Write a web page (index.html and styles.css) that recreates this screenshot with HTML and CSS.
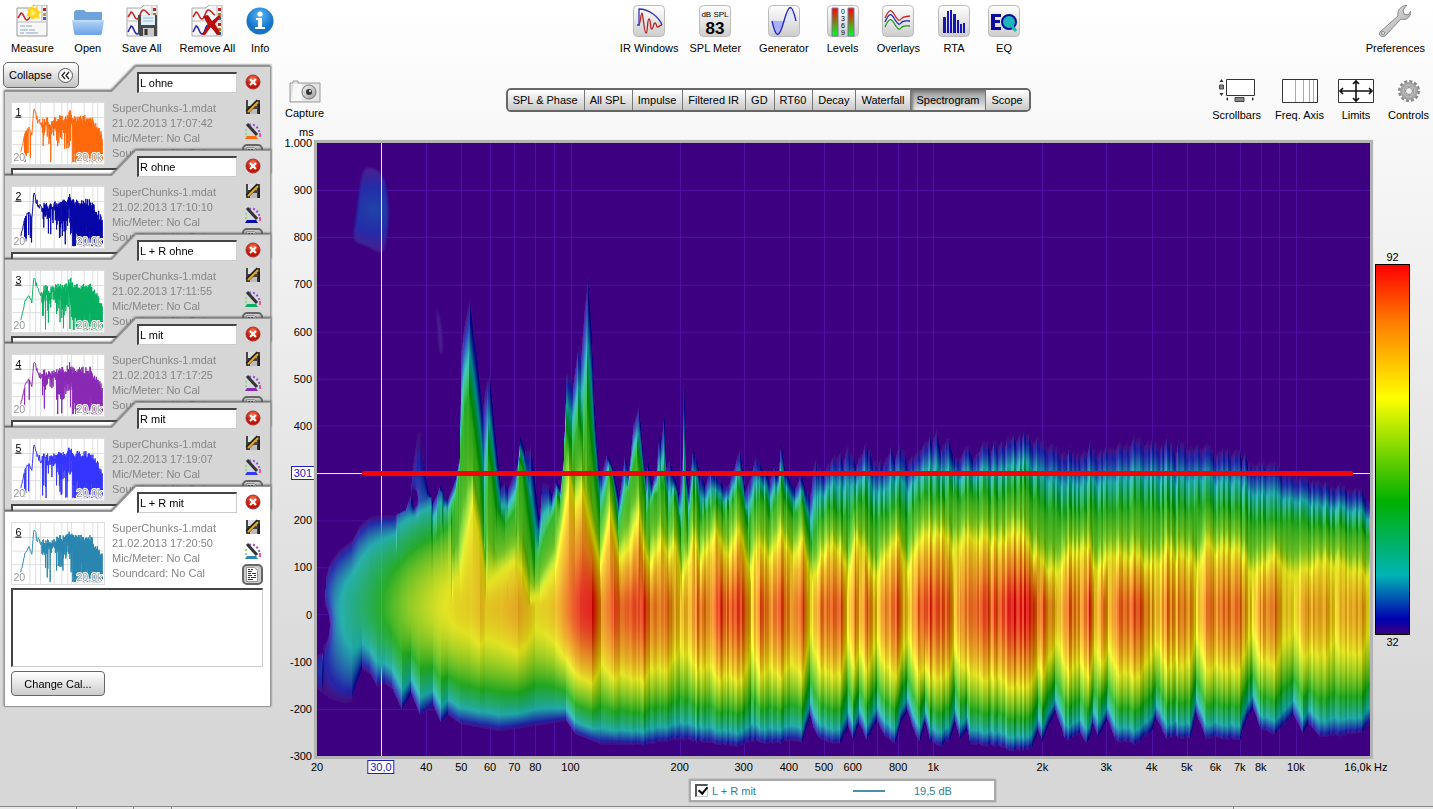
FILE: index.html
```html
<!DOCTYPE html>
<html lang="en">
<head>
  <meta charset="UTF-8">
  <meta name="viewport" content="width=device-width,initial-scale=1">
  <title>Spectrogram</title>
  <link rel="stylesheet" href="styles.css">
</head>
<body>
  <svg class="sprite" aria-hidden="true">
    <defs>
      <linearGradient id="tile" x2="0" y2="1"><stop offset="0" stop-color="#fff"/><stop offset="1" stop-color="#cdcdcd"/></linearGradient>
      <linearGradient id="steel" x2="1" y2="1"><stop offset="0" stop-color="#f4f4f4"/><stop offset="1" stop-color="#9d9d9d"/></linearGradient>
      <linearGradient id="meter" x2="0" y2="1"><stop offset="0" stop-color="#f00"/><stop offset="1" stop-color="#0f2"/></linearGradient>
      <linearGradient id="folder" x2="0" y2="1"><stop offset="0" stop-color="#b4d4f8"/><stop offset="1" stop-color="#6ba3e6"/></linearGradient>
      <radialGradient id="blue" cy=".3"><stop offset="0" stop-color="#5ab8f5"/><stop offset="1" stop-color="#1273c9"/></radialGradient>
      <radialGradient id="red" cy=".3"><stop offset="0" stop-color="#ff7a50"/><stop offset="1" stop-color="#c01408"/></radialGradient>
      <radialGradient id="sun"><stop offset="0" stop-color="#fff58a"/><stop offset="1" stop-color="#ffc800"/></radialGradient>
    </defs>
    <symbol id="pages" viewBox="0 0 32 32">
      <path d="M1 31V3h14l3-3h13v31z" fill="#f7f7f7" stroke="#aaa"/>
      <path d="M1 16h30M26 1v30" stroke="#bbb"/>
      <path d="M2 12l3-5c3 0 3 7 6 7s3-8 6-9 4 4 7 5" fill="none" stroke="#c22" stroke-width="1.5"/>
      <path d="M2 27l3-6c3 0 3 8 6 8s3-8 6-9 4 4 7 5" fill="none" stroke="#22b" stroke-width="1.5"/>
      <path d="M27 3h3v3h-3zM27 18h3v3h-3z" fill="#b22"/><path d="M27 8h3v3h-3zM27 23h3v3h-3z" fill="#997a30"/><path d="M27 12h3v3h-3zM27 27h3v3h-3z" fill="#279"/>
    </symbol>
    <symbol id="delete" viewBox="0 0 16 16">
      <circle cx="8" cy="8" r="7" fill="url(#red)" stroke="#a33"/>
      <path d="M5 5l6 6M11 5l-6 6" stroke="#fff" stroke-width="2.2"/>
    </symbol>
    <symbol id="save" viewBox="0 0 16 16">
      <path d="M1 1h14v14H1z" fill="#444"/><path d="M3 1h9v6H3z" fill="#ddd"/><path d="M5 10h7v5H5z" fill="#bbb"/>
      <path d="M2 13L13 2" stroke="#222" stroke-width="4"/><path d="M3 13L13 3" stroke="#e2ae35" stroke-width="2"/><path d="M14 5v10" stroke="#222" stroke-width="2"/>
    </symbol>
    <symbol id="palette" viewBox="0 0 16 16">
      <path d="M4 2C10 0 15 6 15 13" fill="none" stroke="#9050e0" stroke-width="2" stroke-dasharray="2 2"/>
      <path d="M1 6v6" stroke="#8d8" stroke-width="2" stroke-dasharray="2 2"/><path d="M15 10v4" stroke="#e5569a" stroke-width="2"/>
      <path d="M2 1l10 11" stroke="#333" stroke-width="3"/><path d="M0 16l2-3h9l2 3z" fill="currentColor"/>
    </symbol>
    <symbol id="notes" viewBox="0 0 21 21">
      <rect x="1" y="1" width="19" height="19" rx="4" fill="#ccc" stroke="#666" stroke-width="2"/>
      <path d="M4.500 3.500h8l3 3v11h-11z" fill="#fff" stroke="#999"/>
      <path d="M6 5.500h2M9 5.500h2M6 7.500h4M6 9.500h3M10 9.500h4M6 11.500h4M12 11.500h2M6 13.500h2M9 13.500h5M6 15.500h5" stroke="#333" fill="none"/>
    </symbol>
  </svg>

  <header class="toolbar">
    <div class="tools">
      <button class="tool"><svg class="icon" viewBox="0 0 32 32"><path d="M1 31V3h14l3-3h13v31z" fill="#f7f7f7" stroke="#999"/><path d="M1 17h30M26 1v16" stroke="#bbb"/><path d="M2 13l3-5c3 0 3 7 6 7s3-6 6-8" fill="none" stroke="#c22" stroke-width="1.5"/><path d="M27 3h3v3h-3z" fill="#b22"/><path d="M27 8h3v3h-3z" fill="#cc9830"/><path d="M27 12h3v3h-3z" fill="#36b"/><path d="M4 21h5M10 21h6M4 25h8M13 25h6M4 28h4M10 28h12" stroke="#8ba5c4"/><path d="M16 0l2 3 4-2v4l3 2-2 3 1 4-4-1-4 2-2-3-4-1 2-3-1-4 4-1z" fill="#ffdc30"/><circle cx="17" cy="8" r="5" fill="url(#sun)"/></svg>Measure</button>
      <button class="tool"><svg class="icon" viewBox="0 0 32 32"><path d="M2 28V7l2-2h8l2 2h16v21z" fill="#6fa3dc"/><path d="M0 15h32l-2 13-1 2H3l-1-2z" fill="url(#folder)"/><path d="M1 16h30" stroke="#cfe3fb"/></svg>Open</button>
      <button class="tool"><svg class="icon" viewBox="0 0 32 32"><use href="#pages"/><path d="M12 10h19v21H14l-2-2z" fill="#48494b"/><path d="M15 10h14v10H15z" fill="#dff0fa"/><path d="M17 13h10M17 16h10" stroke="#9bbdd0"/><path d="M17 23h11v8H17z" fill="#c8c8c8"/><path d="M20 24v6" stroke="#333" stroke-width="3"/></svg>Save All</button>
      <button class="tool"><svg class="icon" viewBox="0 0 32 32"><use href="#pages"/><path d="M12 11l5-1 4 6 6-5h3l-6 8 6 10-4 1-6-8-6 8h-3l6-10z" fill="#b80d0d"/></svg>Remove All</button>
      <button class="tool tight"><svg class="icon round" viewBox="0 0 28 32"><circle cx="14" cy="16" r="13.5" fill="url(#blue)"/><circle cx="14" cy="9" r="2.6" fill="#fff"/><path d="M10 13h6v9h3v2H9v-2h3v-7h-2z" fill="#fff"/></svg>Info</button>
    </div>
    <div class="tools">
      <button class="tool"><svg class="icon" viewBox="0 0 32 32"><rect x=".5" y=".5" width="31" height="31" rx="4" fill="url(#tile)" stroke="#bbb"/><path d="M4 20h2V4c10 0 20 8 23 16" fill="none" stroke="#33b" stroke-width="1.3"/><path d="M6 20c1 0 2-12 3-12s2 20 4 20 1-14 3-14 1 11 3 10 1-6 3-6 1 5 3 4 2-2 4-2" fill="none" stroke="#b22" stroke-width="1.3"/></svg>IR Windows</button>
      <button class="tool tight"><svg class="icon" viewBox="0 0 32 32"><rect x=".5" y=".5" width="31" height="31" rx="4" fill="url(#tile)" stroke="#bbb"/><text x="16" y="12" class="splunit">dB SPL</text><text x="16" y="29" class="splvalue">83</text></svg>SPL Meter</button>
      <button class="tool"><svg class="icon" viewBox="0 0 32 32"><rect x=".5" y=".5" width="31" height="31" rx="4" fill="url(#tile)" stroke="#bbb"/><path d="M4 16h12c-5 18-8 18-12 0z" fill="#a9b0ff"/><path d="M16 16c5-18 8-18 12 0z" fill="#e4e6ff"/><path d="M4 16c4 18 7 18 12 0s8-18 12 0" fill="none" stroke="#22c" stroke-width="1.3"/></svg>Generator</button>
      <button class="tool"><svg class="icon" viewBox="0 0 32 32"><rect x=".5" y=".5" width="31" height="31" rx="4" fill="url(#tile)" stroke="#bbb"/><path d="M5 3h6v28H5zM21 3h6v28h-6z" fill="url(#meter)" stroke="#77a"/><text x="16" y="9" class="scale">0</text><text x="16" y="16" class="scale">3</text><text x="16" y="23" class="scale">6</text><text x="16" y="30" class="scale">9</text></svg>Levels</button>
      <button class="tool"><svg class="icon" viewBox="0 0 32 32"><rect x=".5" y=".5" width="31" height="31" rx="4" fill="url(#tile)" stroke="#bbb"/><g fill="none" stroke-width="1.3"><path d="M3 13c4-9 6-9 9-4s5 8 7 5 4-2 9-3" stroke="#c22"/><path d="M3 17c4-9 6-9 9-4s5 8 7 5 4-2 9-2" stroke="#22b"/><path d="M3 22c4-9 6-9 9-4s5 8 7 5 4-2 9-2" stroke="#292"/></g></svg>Overlays</button>
      <button class="tool"><svg class="icon" viewBox="0 0 32 32"><rect x=".5" y=".5" width="31" height="31" rx="4" fill="url(#tile)" stroke="#bbb"/><path d="M5 12h3v16H5zM9 6h2v22H9zM12 5h2v23h-2zM15 9h3v19h-3zM19 15h2v13h-2zM22 19h2v9h-2zM25 18h2v10h-2z" fill="#1616b4"/></svg>RTA</button>
      <button class="tool"><svg class="icon" viewBox="0 0 32 32"><rect x=".5" y=".5" width="31" height="31" rx="4" fill="url(#tile)" stroke="#bbb"/><path d="M3 9h10v3H7v3h5v3H7v4h6v3H3z" fill="#0b0ba0"/><circle cx="21" cy="17" r="7" fill="#1cb5b8" stroke="#0b0ba0" stroke-width="2"/><path d="M23 20l5 6" stroke="#1cb5b8" stroke-width="3"/></svg>EQ</button>
    </div>
    <div class="tools">
      <button class="tool"><svg class="icon" viewBox="0 0 32 32"><path d="M1 27L19 11C18 5 22 1 28 0l-4 5 1 4 4 1 3-4c0 6-5 10-10 8L6 31c-3 2-7-1-5-4z" fill="url(#steel)" stroke="#888"/><circle cx="4" cy="28" r="1.5" fill="#fff" stroke="#888"/></svg>Preferences</button>
    </div>
  </header>

  <div class="workspace">
    <aside class="sidebar">
      <button class="collapse">Collapse
        <svg width="15" height="15" viewBox="0 0 15 15"><circle cx="7.5" cy="7.5" r="7" fill="#fff" stroke="#555"/><path d="M7 4L4 7.500l3 3.500M11 4L8 7.500l3 3.500" fill="none" stroke="#222" stroke-width="1.300"/></svg>
      </button>
      <ul class="cards" id="cards"></ul>
    </aside>

    <main class="main">
      <div class="graphbar">
        <button class="tool capture"><svg class="icon camera" viewBox="0 0 32 24"><path d="M1 4h3V2h5v2h22v19H1z" fill="#e4e4e4" stroke="#999"/><path d="M5 5h8v17H2z" fill="#f8f8f8"/><circle cx="20" cy="13" r="7" fill="url(#steel)" stroke="#777"/><circle cx="20" cy="13" r="3" fill="#333"/><circle cx="21" cy="12" r="1" fill="#fff"/></svg>Capture</button>
        <nav class="tabs">
          <button>SPL &amp; Phase</button>
          <button>All SPL</button>
          <button>Impulse</button>
          <button>Filtered IR</button>
          <button>GD</button>
          <button>RT60</button>
          <button>Decay</button>
          <button>Waterfall</button>
          <button class="active">Spectrogram</button>
          <button>Scope</button>
        </nav>
        <div class="tools graphtools">
          <button class="tool"><svg class="icon wide" viewBox="0 0 36 24"><path d="M7.500 .5h28v16h-28z" fill="#fff" stroke="#333"/><path d="M.5 3l2-3 2 3zM.5 14l2 3 2-3zM9 18v4l-2-2zM33 18v4l2-2z" fill="#333"/><path d="M.5 6h4v4h-4zM16 18.500h9v4h-9z" fill="#888" stroke="#444"/></svg>Scrollbars</button>
          <button class="tool"><svg class="icon wide" viewBox="0 0 36 24"><path d="M.5 .5h35v23H.5z" fill="#fff" stroke="#333"/><path d="M13.500 1v22M21.500 1v22M27.500 1v22M31.500 1v22" stroke="#aaa"/></svg>Freq. Axis</button>
          <button class="tool"><svg class="icon wide" viewBox="0 0 36 24"><path d="M.5 .5h35v23H.5z" fill="#fff" stroke="#333"/><path d="M2 12h32M18 2v20M5 9l-3 3 3 3M31 9l3 3-3 3M15 5l3-3 3 3M15 19l3 3 3-3" fill="none" stroke="#111" stroke-width="1.600"/></svg>Limits</button>
          <button class="tool"><svg class="icon gear" viewBox="0 0 24 24"><circle cx="12" cy="12" r="9.500" fill="none" stroke="#888" stroke-width="3" stroke-dasharray="3 1.970"/><circle cx="12" cy="12" r="6.500" fill="none" stroke="#a4a4a4" stroke-width="5"/><circle cx="12" cy="12" r="6" fill="none" stroke="#c4c4c4"/><circle cx="12" cy="12" r="3.500" fill="#eee" stroke="#888"/></svg>Controls</button>
        </div>
      </div>

      <section class="chart">
        <span class="unit">ms</span>
        <div class="yaxis" id="yaxis"></div>
        <div class="plot">
          <canvas id="spectrogram" width="1053" height="614"></canvas>
          <div class="cursor-x" id="cursorX"></div>
          <div class="cursor-y" id="cursorY"></div>
          <div class="marker" id="marker"></div>
        </div>
        <div class="legend">
          <span>92</span>
          <div class="scalebar"></div>
          <span>32</span>
        </div>
        <div class="xaxis" id="xaxis"></div>
        <span class="hz">Hz</span>
      </section>

      <div class="series">
        <input type="checkbox" id="trace" checked>
        <label for="trace">L + R mit</label>
        <i class="line"></i>
        <span>19,5 dB</span>
      </div>
    </main>
  </div>
  <footer class="status"><i></i><i></i><i></i><i></i><i></i></footer>
  <script src="script.js"></script>
</body>
</html>
```
FILE: styles.css
```css
*{
  box-sizing: border-box;
}
body{
  margin: 0;
  min-height: 100vh;
  display: flex;
  flex-direction: column;
  font: 11px/14px "Liberation Sans", Arial, sans-serif;
  color: #000;
  background: linear-gradient(#fff 0, #f9f9f9 110px, #d7d7d7 90%);
}
button, input, textarea{
  font: inherit;
  color: inherit;
}
.sprite{
  position: absolute;
  width: 0;
  height: 0;
}

/* toolbars */
.toolbar{
  display: flex;
  justify-content: space-between;
  height: 62px;
  padding: 5px 8px 0 11px;
}
.tools{
  display: flex;
  align-items: flex-start;
  gap: 18px;
}
.tool{
  display: flex;
  flex-direction: column;
  align-items: center;
  gap: 4px;
  padding: 0;
  border: 0;
  background: none;
  white-space: nowrap;
}
.tight{
  margin-left: -7px;
}
.icon{
  display: block;
  width: 32px;
  height: 32px;
}
.round{
  width: 28px;
}
.wide{
  width: 36px;
  height: 24px;
}
.gear{
  width: 24px;
  height: 24px;
}
.camera{
  height: 24px;
}
.splunit{
  font-size: 8px;
  text-anchor: middle;
}
.splvalue{
  font-size: 17px;
  font-weight: bold;
  text-anchor: middle;
}
.scale{
  font-size: 7px;
  text-anchor: middle;
}

.workspace{
  flex: 1;
  display: flex;
}

/* measurement list */
.sidebar{
  width: 271px;
  flex: none;
  padding-left: 3px;
}
.collapse{
  position: relative;
  z-index: 1;
  display: flex;
  align-items: center;
  gap: 6px;
  height: 26px;
  padding: 0 5px;
  border: 1px solid #666;
  border-radius: 5px;
  background: linear-gradient(#fff, #c4c4c4);
}
.cards{
  list-style: none;
  margin: -22px 0 0 1px;
  padding: 0;
}
.card{
  position: relative;
  height: 109px;
  margin-bottom: -25px;
  filter: drop-shadow(0 -1px 1px #555);
}
.card.open{
  height: auto;
  margin-bottom: 0;
}
.face{
  position: relative;
  z-index: 0;
  height: 100%;
  padding: 5px 8px 0 7px;
  overflow: hidden;
  background: #999;
  clip-path: polygon(0 25px, 107px 25px, 131px 0, 100% 0, 100% 100%, 0 100%);
}
.face::before{
  content: "";
  position: absolute;
  z-index: -1;
  inset: 1px;
  background: #d6d6d6;
  clip-path: polygon(0 25px, 107px 25px, 131px 0, 100% 0, 100% 100%, 0 100%);
}
.open .face{
  padding-bottom: 11px;
}
.open .face::before{
  background: #fff;
}
.tabrow{
  display: flex;
  justify-content: flex-end;
  align-items: center;
  gap: 8px;
  height: 22px;
}
.name{
  width: 100px;
  height: 21px;
  padding: 0 1px;
  border: 1px solid #ccc;
  border-top: 2px solid #444;
  border-left: 2px solid #444;
  background: #fff;
}
.iconbtn{
  display: block;
  padding: 0;
  border: 0;
  background: none;
}
.iconbtn svg{
  display: block;
  width: 16px;
  height: 16px;
}
.tabrow .iconbtn{
  margin-right: 2px;
}
.info{
  display: flex;
  height: 62px;
  margin-top: 9px;
}
.thumb{
  width: 94px;
  height: 63px;
  flex: none;
  background: #fff;
  border: 1px solid #ddd;
}
.thumb text{
  font-size: 11px;
}
.meta{
  flex: 1;
  margin: -1px 0 0 7px;
  line-height: 15px;
  color: #858585;
  white-space: nowrap;
}
.side{
  display: flex;
  flex-direction: column;
  align-items: center;
  gap: 8px;
  margin-top: -3px;
}
.side .notes svg{
  width: 21px;
  height: 21px;
}
.side .notes{
  margin-top: -3px;
}
.comment{
  display: block;
  width: 100%;
  height: 79px;
  margin-top: 4px;
  border: 1px solid #ccc;
  border-top: 2px solid #444;
  border-left: 2px solid #444;
  background: #fff;
  resize: none;
}
.cal{
  display: block;
  width: 94px;
  height: 25px;
  margin-top: 4px;
  border: 1px solid #666;
  border-radius: 4px;
  background: linear-gradient(#fff, #ccc);
}

/* graph */
.main{
  flex: 1;
  min-width: 0;
  display: flex;
  flex-direction: column;
  padding: 17px 0 4px 14px;
}
.graphbar{
  display: flex;
  justify-content: space-between;
  height: 46px;
  padding-right: 4px;
}
.capture{
  align-self: flex-start;
}
.capture.tool{
  gap: 3px;
}
.graphtools{
  gap: 14px;
}
.graphtools .tool{
  gap: 5px;
}
.tabs{
  display: flex;
  height: 24px;
  margin-top: 9px;
  border: 2px solid #666;
  border-radius: 5px;
  overflow: hidden;
}
.tabs button{
  padding: 0 6px 0 5px;
  border: 0;
  border-right: 1px solid #777;
  background: linear-gradient(#fff, #c9c9c9);
}
.tabs button:last-child{
  border-right: 0;
}
.tabs .active{
  background: linear-gradient(#989898, #d2d2d2 70%, #eee);
  box-shadow: inset 2px 2px 3px #777;
}
.chart{
  flex: 1;
  display: grid;
  grid-template-columns: 29px 1fr 60px;
  grid-template-rows: 15px 1fr 18px;
}
.unit{
  grid-column: 1 / -1;
  padding-left: 14px;
}
.yaxis, .xaxis{
  position: relative;
  margin: 3px;
}
.xaxis{
  grid-column: 2;
  margin: 0 3px;
}
.yaxis{
  margin-right: 0;
}
.yaxis span{
  position: absolute;
  right: 2px;
  transform: translateY(-50%);
}
.xaxis span{
  position: absolute;
  top: 1px;
  transform: translateX(-50%);
  white-space: nowrap;
}
.yaxis .current, .xaxis .current{
  padding: 0 2px;
  border: 1px solid #2020c0;
  background: #fff;
  color: #2020c0;
  line-height: 12px;
}
.yaxis .current{
  right: -1px;
}
.hz{
  padding: 1px 0 0 1px;
}
.plot{
  position: relative;
  border: 3px solid #b3b3b3;
  background: #3c0080;
  box-shadow: 0 0 1px #ccc;
}
.plot canvas{
  position: absolute;
  width: 100%;
  height: 100%;
}
.cursor-x, .cursor-y, .marker{
  position: absolute;
}
.cursor-x{
  top: 0;
  bottom: 0;
  width: 1px;
  background: linear-gradient(#ddeec0 60%, #808878 63%, #808878 85%, #ddeec0 88%);
}
.cursor-y{
  left: 0;
  right: 0;
  height: 1px;
  background: #eee;
}
.marker{
  height: 5px;
  margin-top: -2px;
  border-radius: 2px;
  background: #fb0000;
}
.legend{
  display: flex;
  flex-direction: column;
  align-items: center;
  justify-content: center;
  width: 39px;
}
.scalebar{
  width: 35px;
  height: 60%;
  border: 1px solid #000;
  background: linear-gradient(to top, #3c0080, #0000b0 4%, #00b4b4 16%, #00b000 36%, #ff0 64%, #ff8000 84%, #f00);
}
.series{
  align-self: center;
  display: flex;
  align-items: center;
  width: 307px;
  height: 23px;
  margin: 2px 33px 0 0;
  padding-left: 4px;
  border: 2px solid #aaa;
  background: #fff;
  color: #2f7f9f;
  box-shadow: 0 0 1px #777;
}
.series input{
  appearance: none;
  width: 13px;
  height: 13px;
  margin: 0 4px 0 0;
  border: 2px solid #555;
  border-right: 1px solid #ccc;
  border-bottom: 1px solid #ccc;
}
.series input:checked::before{
  content: "";
  display: block;
  width: 4px;
  height: 7px;
  margin: -1px 0 0 3px;
  border: solid #000;
  border-width: 0 2px 2px 0;
  transform: rotate(40deg);
}
.line{
  width: 32px;
  margin: 0 29px 0 97px;
  border-top: 2px solid #4a90ac;
}
.status{
  display: flex;
  height: 3px;
  border-top: 1px solid #888;
  background: #e8e8e8;
}
.status i{
  flex: 0 1 57px;
  border-left: 1px solid #888;
}
.status i:first-child{
  flex-basis: 76px;
  border: 0;
}
.status i:nth-child(3){
  flex-basis: 38px;
}
.status i:nth-child(4){
  flex: 1;
}
.status i:last-child{
  flex-basis: 200px;
}
```
FILE: script.js
```javascript
const measurements = [
  { name: 'L ohne', time: '17:07:42', color: '#ff6a0d' },
  { name: 'R ohne', time: '17:10:10', color: '#0808a8' },
  { name: 'L + R ohne', time: '17:11:55', color: '#08b060' },
  { name: 'L mit', time: '17:17:25', color: '#8a2bb5' },
  { name: 'R mit', time: '17:19:07', color: '#3636ff' },
  { name: 'L + R mit', time: '17:20:50', color: '#2b87b0', open: true }
];

function random(seed) {
  return () => {
    seed = (seed * 1664525 + 1013904223) % 4294967296;
    return seed / 4294967296;
  };
}

// linear interpolation in a flat list x0, y0, x1, y1, ...
function lookup(list, x) {
  if (x <= list[0]) return list[1];
  for (let i = 2; i < list.length; i += 2) {
    if (x <= list[i]) {
      const t = (x - list[i - 2]) / (list[i] - list[i - 2]);
      return list[i - 1] + t * (list[i + 1] - list[i - 1]);
    }
  }
  return list[list.length - 1];
}

/* ---- measurement cards ---- */
function thumbPath(seed) {
  const rnd = random(seed * 977 + 5);
  const top = [7, 56, 10, 44, 13, 30, 17, 24, 20, 32, 22, 5, 25, 11, 29, 19, 33, 14, 40, 16, 48, 12, 55, 13, 60, 6, 62, 12, 72, 12, 80, 12, 87, 21, 92, 30];
  let d = 'M7 58';
  for (let x = 8; x < 93; x += 0.6) {
    const y = lookup(top, x) + (x > 24 ? rnd() * 8 : rnd() * 2);
    let drop = 0;
    if (x > 62) drop = 28 + rnd() * 38;
    else if (x > 45) drop = rnd() < 0.35 ? rnd() * 48 : 8 + rnd() * 24;
    else if (x > 30) drop = rnd() < 0.25 ? rnd() * 42 : rnd() * 14;
    else if (x > 12 && x < 20 && seed % 3) drop = rnd() < 0.3 ? 20 + rnd() * 10 : 0;
    d += `L${x.toFixed(1)} ${y.toFixed(1)}`;
    if (drop) d += `L${(x + 0.3).toFixed(1)} ${Math.min(61, y + drop).toFixed(1)}`;
  }
  return d;
}

document.getElementById('cards').innerHTML = measurements.map((m, i) => `
  <li class="card ${m.open ? 'open' : ''}">
    <div class="face">
      <div class="tabrow">
        <input class="name" type="text" value="${m.name}" aria-label="Name">
        <button class="iconbtn" aria-label="Delete"><svg><use href="#delete"/></svg></button>
      </div>
      <div class="info">
        <svg class="thumb" viewBox="0 0 94 63">
          <path d="M0 15h94M0 29h94M0 43h94M18 0v63M24 0v63M29 0v63M43 0v63M51 0v63M57 0v63M61 0v63M74 0v63M83 0v63M88 0v63" stroke="#ddd"/>
          <path d="${thumbPath(i + 1)}" fill="none" stroke="${m.color}"/>
          <text x="3" y="13" text-decoration="underline">${i + 1}</text>
          <g fill="#999" stroke="#fff" stroke-width="2" paint-order="stroke"><text x="1" y="60">20</text><text x="66" y="60">20,0k</text></g>
        </svg>
        <div class="meta">
          <div>SuperChunks-1.mdat</div>
          <div>21.02.2013 ${m.time}</div>
          <div>Mic/Meter: No Cal</div>
          <div>Soundcard: No Cal</div>
        </div>
        <div class="side">
          <button class="iconbtn" aria-label="Save"><svg><use href="#save"/></svg></button>
          <button class="iconbtn" aria-label="Colour" style="color:${m.color}"><svg><use href="#palette"/></svg></button>
          <button class="iconbtn notes" aria-label="Notes"><svg><use href="#notes"/></svg></button>
        </div>
      </div>
      <textarea class="comment" aria-label="Comment"></textarea>
      ${m.open ? '<button class="cal">Change Cal...</button>' : ''}
    </div>
  </li>`).join('');

/* ---- axes ---- */
const xPos = f => Math.log(f / 20) / Math.log(800);
const yPos = ms => (1000 - ms) / 1300;

const freqs = [[20, '20'], [40, '40'], [50, '50'], [60, '60'], [70, '70'], [80, '80'], [100, '100'],
  [200, '200'], [300, '300'], [400, '400'], [500, '500'], [600, '600'], [800, '800'], [1000, '1k'],
  [2000, '2k'], [3000, '3k'], [4000, '4k'], [5000, '5k'], [6000, '6k'], [7000, '7k'], [8000, '8k'],
  [10000, '10k'], [14800, '16,0k']];
document.getElementById('xaxis').innerHTML = freqs.map(([f, t]) =>
  `<span style="left:${xPos(f) * 100}%">${t}</span>`).join('') +
  `<span class="current" style="left:${xPos(30) * 100}%">30,0</span>`;

let labels = '';
for (let ms = 1000; ms >= -300; ms -= 100) {
  if (ms === 300) continue;
  labels += `<span style="top:${yPos(ms) * 100}%">${ms === 1000 ? '1.000' : ms}</span>`;
}
labels += `<span class="current" style="top:${yPos(301) * 100}%">301</span>`;
document.getElementById('yaxis').innerHTML = labels;

document.getElementById('cursorX').style.left = xPos(30) * 100 + '%';
document.getElementById('cursorY').style.top = yPos(301) * 100 + '%';
const marker = document.getElementById('marker');
marker.style.top = yPos(301) * 100 + '%';
marker.style.left = '4.3%';
marker.style.right = '1.6%';

/* ---- spectrogram ---- */
const canvas = document.getElementById('spectrogram');
const ctx = canvas.getContext('2d');
const W = canvas.width, H = canvas.height;
const OX = 317, OY = 143, MID = 608;

// contours of the decay, each as x, y pairs
const edgeTop = [317,653,322,650,324,600,326,575,330,562,340,549,352,540,360,525,370,517,380,515,395,515,405,510,410,495,412,470,417,433,420,432,424,462,428,490,433,502,437,494,440,484,444,495,448,498,455,480,459,458,461,350,464,325,470,297,473,325,476,345,480,385,483,403,486,382,490,375,493,410,498,460,501,488,505,480,508,488,513,475,517,465,520,435,525,450,529,450,531,443,534,470,539,520,542,482,549,485,552,495,556,480,560,488,563,460,566,375,568,372,573,382,578,345,581,350,584,310,588,275,591,320,594,400,598,460,602,470,607,452,612,465,619,497,625,450,628,475,633,425,639,403,643,458,646,475,648,460,652,485,656,470,659,427,661,440,664,413,666,470,670,460,679,495,682,460,683,385,684,385,686,470,689,485,693,445,697,462,705,485,711,463,715,475,727,488,735,465,740,448,745,490,750,480,756,453,763,470,770,475,775,465,778,475,781,440,785,468,795,488,800,475,808,490,811,490,816,457,825,470,830,463,840,447,844,455,848,446,857,462,867,444,875,460,883,465,891,444,895,456,900,445,907,458,912,460,920,448,930,440,937,430,941,450,946,435,955,460,963,450,967,447,973,457,980,446,1000,440,1025,433,1045,440,1060,450,1080,453,1100,448,1120,445,1150,441,1180,443,1210,450,1240,450,1250,462,1278,464,1282,474,1310,478,1340,488,1360,490,1370,500];
const coreTop = [317,653,322,650,324,600,326,575,330,562,340,549,352,540,360,525,370,517,380,515,400,514,420,502,440,494,460,478];
const greenTop = [440,518,455,500,460,450,464,410,469,395,474,425,480,470,484,535,488,455,492,475,497,515,505,525,515,510,519,460,523,470,529,520,535,565,545,535,555,510,562,455,566,430,572,450,578,420,583,440,587,395,592,450,600,520,605,500,610,465,618,530,625,500,637,450,641,470,646,515,660,485,665,490,668,525,674,495,681,540,685,498,688,525,693,490,702,520,712,500,725,515,740,490,748,530,757,495,770,510,782,490,793,515,803,505,812,550,818,515,840,506,848,518,857,500,867,506,877,522,897,502,907,520,920,497,950,496,1000,494,1025,485,1045,505,1060,512,1150,506,1240,508,1252,520,1300,522,1370,533];
const yellowTop = [440,590,460,580,467,545,473,505,479,535,486,585,500,575,515,562,522,570,530,600,540,597,555,570,563,520,569,480,575,508,582,490,588,515,594,540,600,566,610,510,619,560,630,545,639,510,643,550,650,565,661,540,668,562,674,543,682,582,693,540,700,562,715,532,727,558,740,530,750,578,757,540,767,558,782,535,793,558,803,540,813,588,820,553,841,545,848,578,855,538,865,556,877,580,885,556,897,538,907,575,920,540,945,533,952,556,962,540,1000,540,1018,532,1038,556,1057,576,1065,556,1088,550,1093,570,1112,555,1155,565,1165,553,1192,557,1197,576,1205,550,1240,550,1250,575,1275,558,1290,578,1320,563,1370,577];
const edgeBottom = [317,690,330,700,345,704,352,702,356,688,362,670,370,675,377,688,385,685,392,690,402,712,411,695,420,717,433,707,441,725,448,716,460,725,500,732,560,723,566,722,575,735,600,745,640,746,680,740,715,745,740,747,750,742,770,745,790,742,802,743,810,718,818,740,840,746,848,728,853,742,859,724,867,742,877,722,885,738,895,745,900,725,907,712,915,735,920,743,925,722,930,742,940,748,950,740,955,723,960,742,967,730,970,745,1000,748,1010,752,1032,750,1038,732,1042,743,1055,712,1065,742,1080,735,1087,745,1093,725,1098,740,1107,720,1115,742,1135,744,1150,735,1156,720,1165,738,1190,740,1196,714,1205,738,1225,740,1240,741,1246,720,1253,710,1260,730,1275,735,1285,725,1293,716,1303,735,1308,725,1320,738,1350,735,1362,733,1370,725];
const peakLevel = [317,.05,323,.06,330,.10,337,.15,345,.19,360,.25,370,.3,380,.35,392,.42,410,.52,440,.63,455,.67,470,.69,480,.73,485,.70,500,.72,518,.77,526,.73,535,.67,545,.69,555,.73,563,.82,572,.91,580,.97,592,1,601,.80,605,.84,614,.94,620,.88,637,.94,643,.95,650,.85,665,.86,680,.72,690,.78,698,.87,708,.83,720,.95,726,.88,742,.95,748,.79,751,.68,760,.92,766,.84,782,.92,790,.81,803,.91,808,.74,812,.66,820,.9,828,.86,841,.94,847,.68,855,.87,859,.75,867,.88,877,.7,883,.82,897,.93,903,.74,910,.72,918,.9,935,.93,947,.91,954,.72,960,.85,968,.86,980,.92,1000,.93,1008,.99,1033,.98,1037,.84,1043,.92,1057,.72,1067,.88,1080,.82,1089,.92,1094,.74,1103,.88,1108,.75,1117,.88,1140,.89,1155,.74,1165,.84,1190,.83,1196,.68,1206,.84,1220,.86,1240,.88,1246,.74,1252,.69,1260,.82,1275,.85,1282,.72,1294,.68,1305,.79,1325,.77,1335,.7,1350,.77,1362,.76,1370,.68];

const stops = [[0, 60, 0, 128], [.04, 0, 0, 176], [.165, 0, 180, 180], [.36, 0, 176, 0], [.643, 255, 255, 0], [.84, 255, 128, 0], [1, 255, 0, 0]];
function colorOf(v) {
  v = Math.max(0, Math.min(1, v));
  let i = 1;
  while (v > stops[i][0]) i++;
  const a = stops[i - 1], b = stops[i], t = (v - a[0]) / (b[0] - a[0]);
  return [1, 2, 3].map(k => a[k] + t * (b[k] - a[k]));
}

// ripple between neighbouring frequency bins, fine and coarse
function makeRipple(seed, min, spread) {
  const rnd = random(seed), list = [];
  let from = 0, to = 0, step = 1, pos = 0;
  for (let x = 0; x < W + 4; x++) {
    if (pos >= step) {
      pos = 0;
      from = to;
      const size = .15 + .85 * rnd() * rnd();
      to = from > 0 ? -size : size;
      step = min + Math.floor(rnd() * spread);
    }
    list.push(from + (to - from) * pos / step);
    pos++;
  }
  return list;
}
const fine = makeRipple(41, 2, 3);
const coarse = makeRipple(77, 4, 7);

function columnLevels(px) {
  const x = px + OX;
  const w = Math.max(0, Math.min(1, (x - 590) / 120)) * (x > 1250 ? .6 : 1);
  const r = (fine[px] * .9 + coarse[px]) * w;
  const p = lookup(peakLevel, x) + r * .045;
  const t = lookup(edgeTop, x) - r * (x > 800 ? 8 : 5);
  const g = Math.max(t + 14, lookup(greenTop, x) - r * 9);
  const yl = Math.max(g + 14, lookup(yellowTop, x) - r * 9);
  const b = lookup(edgeBottom, x) + r * 2;
  const mid = Math.max(t + 18, Math.min(b - 12, MID));
  const core = Math.max(t, lookup(coreTop, x));
  const blend = Math.max(0, Math.min(1, (x - 440) / 18));
  const pts = [[t, 0], [t + (g - t) * .25, .06], [t + (g - t) * .55, .165], [g, .36]];
  if (p > .66) {
    const sag = Math.max(0, Math.min(1, (yl - g - 20) / 60));
    pts.push([g + (yl - g) * .6, .53 - .09 * sag]);
    pts.push([yl, .643]);
    if (p > .74) pts.push([yl + (mid - yl) * .4, .643 + (p - .643) * .55]);
  }
  while (pts.length > 1 && (pts[pts.length - 1][1] > p - .02 || pts[pts.length - 1][0] > mid - 6)) pts.pop();
  pts.push([mid, p]);
  // slopes for a monotone curve through the contour points
  const n = pts.length, s = [], m = [];
  for (let i = 0; i < n - 1; i++) s.push((pts[i + 1][1] - pts[i][1]) / (pts[i + 1][0] - pts[i][0]));
  m[0] = s[0];
  m[n - 1] = 0;
  for (let i = 1; i < n - 1; i++) m[i] = 2 * s[i - 1] * s[i] / (s[i - 1] + s[i]);
  const col = new Float32Array(H);
  let k = 0;
  for (let py = 0; py < H; py++) {
    const y = py + OY;
    let v = -1;
    if (y >= t && y < mid) {
      while (k < n - 2 && y > pts[k + 1][0]) k++;
      const h = pts[k + 1][0] - pts[k][0], u = (y - pts[k][0]) / h, u2 = u * u, u3 = u2 * u;
      v = (2 * u3 - 3 * u2 + 1) * pts[k][1] + (u3 - 2 * u2 + u) * h * m[k] +
        (3 * u2 - 2 * u3) * pts[k + 1][1] + (u3 - u2) * h * m[k + 1];
      if (blend < 1) {
        let low = y > core ? p * (1 - Math.pow((mid - y) / (mid - core), 2)) : 0;
        if (core > t) low += .09 * Math.min(1, (y - t) / (core - t)) * (y > core ? Math.max(0, 1 - (y - core) / 40) : 1);
        v = low * (1 - blend) + v * blend;
      }
    } else if (y >= mid && y < b) {
      v = p * (1 - Math.pow((y - mid) / (b - mid), 1.8));
    }
    if (x < 345 && v > 0) {
      v -= .16 * Math.exp(-Math.pow((x - 323) / 8, 2) - Math.pow((y - 624) / 20, 2));
    }
    if (v > 0) {
      // narrow hole beside the 38 Hz ridge
      v -= .14 * Math.exp(-Math.pow((x - 415) / 3, 2) - Math.pow((y - 500) / 11, 2));
    }
    col[py] = v;
  }
  return col;
}

function draw() {
  ctx.fillStyle = '#3c0080';
  ctx.fillRect(0, 0, W, H);

  ctx.fillStyle = '#4c10a4';
  for (let dec = 10; dec <= 10000; dec *= 10) {
    for (let n = 1; n < 10; n++) {
      const f = n * dec;
      if (f > 20 && f < 16000) ctx.fillRect(Math.round(xPos(f) * W), 0, 1, H);
    }
  }
  for (let ms = 900; ms > -300; ms -= 100) ctx.fillRect(0, Math.round(yPos(ms) * H), W, 1);

  // isolated resonances
  ctx.save();
  ctx.translate(-OX, -OY);
  const g = ctx.createRadialGradient(375, 210, 4, 374, 210, 42);
  g.addColorStop(0, '#2140a8');
  g.addColorStop(.5, '#252ca8');
  g.addColorStop(1, '#4a1e90');
  ctx.fillStyle = g;
  ctx.filter = 'blur(1px)';
  ctx.beginPath();
  ctx.moveTo(366, 168);
  ctx.bezierCurveTo(374, 166, 382, 171, 385, 182);
  ctx.bezierCurveTo(390, 205, 389, 235, 384, 250);
  ctx.bezierCurveTo(380, 257, 372, 247, 360, 244);
  ctx.bezierCurveTo(350, 240, 354, 235, 357, 212);
  ctx.bezierCurveTo(360, 185, 361, 172, 366, 168);
  ctx.fill();
  ctx.fillStyle = '#4c2090';
  ctx.beginPath();
  ctx.moveTo(436, 308);
  ctx.bezierCurveTo(441, 318, 444, 340, 442, 354);
  ctx.bezierCurveTo(438, 358, 438, 325, 436, 308);
  ctx.fill();
  ctx.restore();

  const cols = [];
  for (let x = 0; x <= W; x++) cols.push(columnLevels(x));
  const img = ctx.getImageData(0, 0, W, H);
  for (let x = 0; x < W; x++) {
    const here = cols[x], right = cols[x + 1];
    for (let y = 0; y < H; y++) {
      if (here[y] <= 0) continue;
      const c = colorOf(here[y]);
      // relief shading, lit from the left
      const slope = Math.max(0, right[y]) - here[y];
      const light = Math.max(0, Math.min(1, .5 + slope * 24));
      const o = (y * W + x) * 4;
      const fade = Math.min(1, .35 + here[y] * 20);
      for (let k = 0; k < 3; k++) {
        const v = c[k] * .75 + 64 * light;
        img.data[o + k] = img.data[o + k] * (1 - fade) + v * fade;
      }
    }
  }
  ctx.putImageData(img, 0, 0);
}
draw();
```
